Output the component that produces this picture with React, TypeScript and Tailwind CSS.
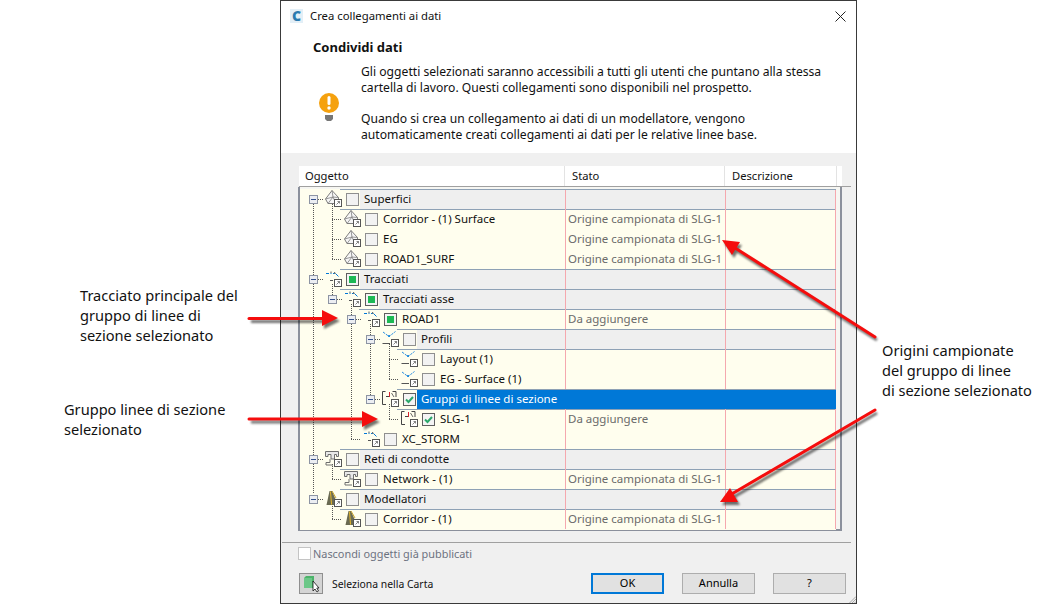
const ORIGIN = 'Origine campionata di SLG-1';

type IconKind = 'surface' | 'alignment' | 'profile' | 'group' | 'pipe' | 'corridor';
type Check = 'none' | 'partial' | 'checked';

interface TreeRow {
  label: string;
  level: 0 | 1 | 2 | 3 | 4;
  icon: IconKind;
  check: Check;
  status?: string;
  expander?: boolean;
  group?: boolean;
  selected?: boolean;
}

const rows: TreeRow[] = [
  { label: 'Superfici', level: 0, icon: 'surface', check: 'none', expander: true, group: true },
  { label: 'Corridor - (1) Surface', level: 1, icon: 'surface', check: 'none', status: ORIGIN },
  { label: 'EG', level: 1, icon: 'surface', check: 'none', status: ORIGIN },
  { label: 'ROAD1_SURF', level: 1, icon: 'surface', check: 'none', status: ORIGIN },
  { label: 'Tracciati', level: 0, icon: 'alignment', check: 'partial', expander: true, group: true },
  { label: 'Tracciati asse', level: 1, icon: 'alignment', check: 'partial', expander: true, group: true },
  { label: 'ROAD1', level: 2, icon: 'alignment', check: 'partial', expander: true, status: 'Da aggiungere' },
  { label: 'Profili', level: 3, icon: 'profile', check: 'none', expander: true, group: true },
  { label: 'Layout (1)', level: 4, icon: 'profile', check: 'none' },
  { label: 'EG - Surface (1)', level: 4, icon: 'profile', check: 'none' },
  { label: 'Gruppi di linee di sezione', level: 3, icon: 'group', check: 'checked', expander: true, group: true, selected: true },
  { label: 'SLG-1', level: 4, icon: 'group', check: 'checked', status: 'Da aggiungere' },
  { label: 'XC_STORM', level: 2, icon: 'alignment', check: 'none' },
  { label: 'Reti di condotte', level: 0, icon: 'pipe', check: 'none', expander: true, group: true },
  { label: 'Network - (1)', level: 1, icon: 'pipe', check: 'none', status: ORIGIN },
  { label: 'Modellatori', level: 0, icon: 'corridor', check: 'none', expander: true, group: true },
  { label: 'Corridor - (1)', level: 1, icon: 'corridor', check: 'none', status: ORIGIN },
];

const levelPadding = ['pl-[9px]', 'pl-[28px]', 'pl-[47px]', 'pl-[66px]', 'pl-[85px]'];

const Badge = () => (
  <g>
    <rect x="9.5" y="9.5" width="7" height="7" fill="#fff" stroke="#555" />
    <path d="M11.5 14.5 L14.5 11.5 M12.5 11.5 H14.5 V13.5" stroke="#666" strokeWidth="0.8" fill="none" />
  </g>
);

const RowIcon = ({ kind }: { kind: IconKind }) => (
  <svg width="17" height="17" viewBox="0 0 17 17" className="shrink-0">
    {kind === 'surface' && (
      <g fill="none" stroke="#7d7d7d">
        <path d="M0.5 9 L7 0.5 L13.5 7.5 V13.5 H3 L0.5 9 Z" fill="#f6f6f6" />
        <path d="M0.5 9 L8 7 L13.5 7.5 M7 0.5 L8 7 L3 13.5 M8 7 L11 13.5" strokeWidth="0.8" />
      </g>
    )}
    {kind === 'alignment' && (
      <g fill="none">
        <path d="M1 3.5 H4 M5.5 3.5 H6.5 M8 3.5 L9.5 3.5" stroke="#0078d7" />
        <path d="M10.5 3.5 L13.5 6.5" stroke="#0078d7" />
        <path d="M5 10.5 H8" stroke="#555" />
        <path d="M6 1.5 V3 M9.5 2 L10 4" stroke="#333" strokeWidth="0.8" />
      </g>
    )}
    {kind === 'profile' && (
      <g fill="none">
        <path d="M1 2 L7 6.5 L13.5 1.5" stroke="#2b8fe0" strokeDasharray="2.5 1" />
        <circle cx="7" cy="6" r="1" fill="#0078d7" />
        <path d="M0.5 13.5 H8" stroke="#555" />
      </g>
    )}
    {kind === 'group' && (
      <g fill="none" stroke="#444">
        <path d="M3.5 1.5 H0.5 V14.5 H4" />
        <path d="M10.5 1.5 H14 V7" />
        <path d="M4 6.5 H7" />
        <path d="M7.5 2 V7" stroke="#d9232e" />
        <path d="M9.5 3 L12 7" strokeWidth="0.8" />
      </g>
    )}
    {kind === 'pipe' && (
      <g fill="none" stroke="#6e6e6e">
        <path d="M0.5 1.5 H13.5 V6.5 H11.5 V4.5 H9.5 V9 H6 V4.5 H3 V6.5 H0.5 Z" fill="#e8e8e8" />
        <path d="M5 9 V12.5 H1 V15 H8" fill="none" />
      </g>
    )}
    {kind === 'corridor' && (
      <g>
        <path d="M4.5 1 H7 L13 15 H1.5 Z" fill="#6a6a52" />
        <path d="M5.5 1.5 L6.5 14.5" stroke="#e9b92b" strokeWidth="1" />
        <path d="M7 1 L11 8" stroke="#c9a227" strokeWidth="1" fill="none" />
      </g>
    )}
    <Badge />
  </svg>
);

const CheckBox = ({ check }: { check: Check }) => (
  <div
    className={`w-[13px] h-[13px] shrink-0 border flex items-center justify-center ${
      check === 'none' ? 'border-[#8f8f8f] bg-[#f2f2f2]' : 'border-[#5f5f5f] bg-[#f4f4f4]'
    }`}
  >
    {check === 'partial' && <div className="w-[7px] h-[7px] bg-[#1db954]" />}
    {check === 'checked' && (
      <svg width="11" height="11" viewBox="0 0 11 11">
        <path d="M2 5.5 L4.5 8 L9 3" fill="none" stroke="#2aa86a" strokeWidth="2" />
      </svg>
    )}
  </div>
);

const Expander = () => (
  <div className="w-[9px] h-[9px] border border-[#8d94a3] bg-[#eceef2] flex items-center justify-center">
    <div className="w-[5px] h-px bg-[#34508c]" />
  </div>
);

const Row = ({ row }: { row: TreeRow }) => (
  <div className={`flex items-center h-5 ${levelPadding[row.level]}`}>
    <div className="w-[9px] mr-[7px] shrink-0 relative z-10">{row.expander && <Expander />}</div>
    <div className="relative z-10 -mt-px shrink-0">
      <RowIcon kind={row.icon} />
    </div>
    <div
      className={`flex-1 h-5 -ml-[2px] flex items-center pl-[6px] min-w-0 ${
        row.group ? 'border-t border-[#8ea1b5] shadow-[0_1px_0_#8ea1b5]' : ''
      }`}
    >
      <CheckBox check={row.check} />
      <div
        className={`ml-[1px] flex-1 h-full flex items-center min-w-0 ${
          row.selected ? 'bg-[#0078d7] text-white' : row.group ? 'bg-[#efefef]' : ''
        }`}
      >
        <div className={`flex-1 min-w-0 whitespace-nowrap -mt-px ${row.group ? 'pl-[4px]' : 'pl-[4px]'}`}>{row.label}</div>
        <div className={`w-[160px] h-full shrink-0 pl-[2px] flex items-center text-[#6b6b6b] border-l ${row.selected ? 'border-[#0078d7]' : 'border-[#f5a8ae]'}`}>
          <span className="-mt-px">{row.status}</span>
        </div>
        <div className={`w-[111px] h-full shrink-0 border-x ${row.selected ? 'border-[#0078d7]' : 'border-[#f5a8ae]'}`} />
      </div>
    </div>
  </div>
);

// dotted tree connectors, coordinates relative to the row area
const TreeLines = () => {
  const segs: [number, number, number, number][] = [
    [313, 204, 313, 494],
    [318, 199, 323, 199],
    [318, 279, 323, 279],
    [318, 459, 323, 459],
    [318, 499, 323, 499],
    [332, 204, 332, 259],
    [332, 219, 342, 219],
    [332, 239, 342, 239],
    [332, 259, 342, 259],
    [332, 284, 332, 295],
    [337, 299, 342, 299],
    [351, 304, 351, 439],
    [356, 319, 361, 319],
    [351, 439, 361, 439],
    [370, 324, 370, 395],
    [375, 339, 380, 339],
    [375, 399, 380, 399],
    [389, 344, 389, 379],
    [389, 359, 399, 359],
    [389, 379, 399, 379],
    [389, 404, 389, 419],
    [389, 419, 399, 419],
    [332, 464, 332, 479],
    [332, 479, 342, 479],
    [332, 504, 332, 519],
    [332, 519, 342, 519],
  ];
  return (
    <svg className="absolute left-0 top-0 pointer-events-none z-[5]" width="120" height="340" shapeRendering="crispEdges">
      {segs.map(([a, b, c, d], i) => {
        const vertical = a === c;
        return (
          <line
            key={i}
            x1={a - 300 + (vertical ? 0.5 : 0)}
            y1={b - 189 + (vertical ? 0 : 0.5)}
            x2={c - 300 + (vertical ? 0.5 : 0)}
            y2={d - 189 + (vertical ? 0 : 0.5)}
            stroke="#555"
            strokeWidth="1"
            strokeDasharray="1 1"
          />
        );
      })}
    </svg>
  );
};

const Arrow = ({ shaft, head }: { shaft: string; head: string }) => (
  <g>
    <g opacity="0.55" transform="translate(2 3)" filter="url(#soft)">
      <path d={shaft} stroke="#000" strokeWidth="3" fill="none" />
      <polygon points={head} fill="#000" />
    </g>
    <path d={shaft} stroke="#f50d0d" strokeWidth="3" fill="none" strokeLinecap="round" />
    <polygon points={head} fill="#f50d0d" />
  </g>
);

const Button = ({ children, primary }: { children: string; primary?: boolean }) => (
  <div
    className={`w-[73px] h-[21px] flex items-center justify-center bg-[#e1e1e1] text-black ${
      primary ? 'border-2 border-[#0078d7]' : 'border border-[#adadad]'
    }`}
  >
    {children}
  </div>
);

export default function App() {
  return (
    <div className="relative w-[1059px] h-[604px] bg-white overflow-hidden font-['Noto_Sans',sans-serif] text-[11.5px] text-[#111]">
      {/* Dialog */}
      <div className="relative ml-[280px] w-[577px] h-[604px] border border-[#3a3a3a] bg-[#f0f0f0] flex flex-col">
        <div className="bg-white h-[152px] shrink-0">
          <div className="h-[30px] flex items-center pl-[9px]">
            <div className="w-[13px] h-[14px] bg-[#e3eff7] flex items-center justify-center">
              <span className="text-[#2a7ab0] font-black text-[14px] leading-none">C</span>
            </div>
            <span className="ml-[7px] text-[11.3px]">Crea collegamenti ai dati</span>
            <svg width="11" height="11" viewBox="0 0 11 11" className="ml-auto mr-[10px]">
              <path d="M0.5 0.5 L10.5 10.5 M10.5 0.5 L0.5 10.5" stroke="#222" />
            </svg>
          </div>
          <div className="pl-[32px] pt-[7px] font-bold text-[13px] leading-[18px]">Condividi dati</div>
          <div className="flex pt-[8px]">
            <div className="w-[80px] shrink-0 pl-[38px] pt-[29px]">
              <svg width="20" height="29" viewBox="0 0 20 29">
                <circle cx="10" cy="10" r="10" fill="#f5a10e" />
                <rect x="8.5" y="3" width="3" height="9" rx="1.5" fill="#fff" />
                <circle cx="10" cy="15" r="1.7" fill="#fff" />
                <path d="M6 22 H14 V26 L12 28 H8 L6 26 Z" fill="#777" />
              </svg>
            </div>
            <div className="leading-[16px] whitespace-nowrap text-[12.15px]">
              <p>Gli oggetti selezionati saranno accessibili a tutti gli utenti che puntano alla stessa</p>
              <p>cartella di lavoro. Questi collegamenti sono disponibili nel prospetto.</p>
              <p className="mt-[15px]">Quando si crea un collegamento ai dati di un modellatore, vengono</p>
              <p>automaticamente creati collegamenti ai dati per le relative linee base.</p>
            </div>
          </div>
        </div>

        {/* Table */}
        <div className="mt-[13px] ml-[17px]">
          <div className="ml-[1px] w-[552px] border-b border-[#a0a0a0] text-[11.2px]">
            <div className="w-[543px] h-[20px] bg-white flex items-center">
              <div className="w-[266px] h-full pl-[6px] flex items-center border-r border-[#e3e3e3]">Oggetto</div>
              <div className="w-[160px] h-full pl-[7px] flex items-center border-r border-[#e3e3e3]">Stato</div>
              <div className="w-[112px] h-full pl-[7px] flex items-center border-r border-[#e3e3e3]">Descrizione</div>
            </div>
          </div>
          <div className="w-[544px] h-[344px] border-x-2 border-b-2 border-[#8b909c] bg-[#f6f6f2]">
            <div className="relative w-[536px] h-[341px] top-[2px] bg-[#fffeee]">
              <TreeLines />
              {rows.map((row) => (
                <Row key={row.label + row.level} row={row} />
              ))}
            </div>
          </div>
        </div>

        {/* Footer */}
        <div className="mt-[11px] ml-[1px] w-[569px] border-t border-[#a0a0a0]" />
        <div className="mt-[4px] h-[13px] ml-[17px] flex items-center text-[#6d7280] text-[10.9px]">
          <div className="w-[13px] h-[13px] border border-[#c4c4c4] bg-white" />
          <span className="ml-[2px] mt-px">Nascondi oggetti già pubblicati</span>
        </div>
        <div className="mt-[13px] ml-[18px] flex items-center">
          <div className="w-[24px] h-[21px] bg-[#d4d4d4] border border-[#8f8f8f] flex items-center justify-center">
            <svg width="20" height="18" viewBox="0 0 20 18">
              <path d="M3 3 L5 1 H13 V13 H3 Z" fill="#4cb36a" />
              <path d="M3 3 H11 V13 H3 Z" fill="#6cc788" />
              <path d="M12 6 V16 L14 14 L16 17 L17.5 16 L15.8 13 H18 Z" fill="#fff" stroke="#111" strokeWidth="0.8" />
            </svg>
          </div>
          <span className="ml-[9px] mt-[3px] text-[10.4px]">Seleziona nella Carta</span>
          <div className="ml-auto mr-[10px] flex gap-[18px] text-[11px]">
            <Button primary>OK</Button>
            <Button>Annulla</Button>
            <Button>?</Button>
          </div>
        </div>
        <svg width="7" height="7" viewBox="0 0 7 7" className="absolute right-0 bottom-0">
          <path d="M0.5 7 L7 0.5 M3 7 L7 3 M5.5 7 L7 5.5" stroke="#a8a8a8" />
        </svg>
      </div>

      {/* Callouts */}
      <div className="absolute left-[80px] top-[285px] text-[14.6px] leading-[20px] text-[#111] whitespace-nowrap">
        Tracciato principale del
        <br />
        gruppo di linee di
        <br />
        sezione selezionato
      </div>
      <div className="absolute left-[64px] top-[399px] text-[14.6px] leading-[20px] text-[#111] whitespace-nowrap">
        Gruppo linee di sezione
        <br />
        selezionato
      </div>
      <div className="absolute left-[882px] top-[340px] text-[14.6px] leading-[20px] text-[#111] whitespace-nowrap">
        Origini campionate
        <br />
        del gruppo di linee
        <br />
        di sezione selezionato
      </div>

      <svg className="absolute left-0 top-0 pointer-events-none z-20" width="1059" height="604">
        <defs>
          <filter id="soft" x="-20%" y="-20%" width="140%" height="140%">
            <feGaussianBlur stdDeviation="1.2" />
          </filter>
        </defs>
        <Arrow shaft="M249 318.5 H325" head="322,310 338,318 322,326" />
        <Arrow shaft="M249 419 H365" head="362,411 378,419 362,427" />
        <Arrow shaft="M875 337 L732 246" head="722,240 740,242 732,255" />
        <Arrow shaft="M875 410 L730 495" head="720,502 730,488 738,502" />
      </svg>
    </div>
  );
}
